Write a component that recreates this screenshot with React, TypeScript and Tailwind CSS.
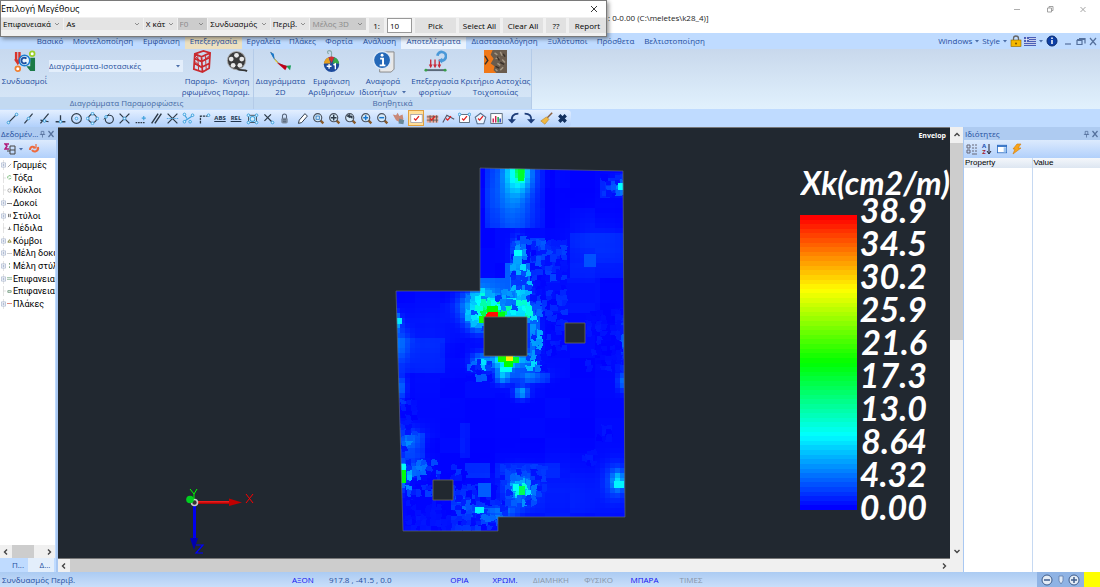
import type { ReactNode } from 'react';

const INK = '#1f4e9e';

/* ---------- colour scale ---------- */

const STOPS = [
  [0, 0, 255],
  [0, 255, 255],
  [0, 255, 0],
  [255, 255, 0],
  [255, 0, 0],
];

function heat(v: number) {
  const t = Math.min(0.9999, Math.max(0, v)) * 4;
  const i = Math.floor(t);
  const c = STOPS[i].map((a, k) => Math.round(a + (STOPS[i + 1][k] - a) * (t - i)));
  return `rgb(${c.join(',')})`;
}

/* ---------- reinforcement field ---------- */

// x, y, rx, ry, peak
const blobs: number[][] = [
  [519, 172, 13, 20, 0.2],
  [521, 172, 4, 7, 0.2],
  [512, 195, 22, 55, 0.11],
  [486, 308, 13, 13, 0.2],
  [472, 305, 15, 14, 0.12],
  [480, 322, 13, 12, 0.14],
  [519, 285, 8, 22, 0.07],
  [518, 252, 6, 14, 0.1],
  [534, 330, 6, 28, 0.14],
  [506, 360, 13, 9, 0.3],
  [482, 362, 10, 8, 0.14],
  [526, 360, 10, 8, 0.12],
  [503, 376, 7, 8, 0.16],
  [525, 376, 18, 7, 0.09],
  [522, 393, 7, 6, 0.16],
  [620, 186, 8, 7, 0.12],
  [397, 322, 4, 8, 0.16],
  [398, 345, 12, 18, 0.09],
  [400, 388, 6, 12, 0.11],
  [405, 440, 17, 12, 0.08],
  [403, 476, 4, 12, 0.2],
  [413, 467, 12, 10, 0.07],
  [520, 489, 7, 9, 0.2],
  [519, 488, 15, 15, 0.11],
  [619, 481, 6, 9, 0.14],
  [616, 482, 12, 18, 0.07],
  [622, 340, 4, 20, 0.08],
  [622, 382, 4, 9, 0.1],
  [500, 512, 18, 7, 0.11],
  [478, 510, 7, 4, 0.12],
  [460, 500, 8, 8, 0.09],
  [560, 500, 50, 30, 0.025],
  [600, 240, 30, 25, 0.02],
  [430, 335, 25, 30, 0.02],
];

// stepped zones: x0, y0, x1, y1, value
const zones: number[][] = [
  [484, 168, 495, 229, 0.015],
  [545, 168, 557, 229, -0.01],
  [480, 277, 508, 312, 0.09],
  [508, 264, 530, 300, 0.08],
  [498, 300, 530, 317, 0.2],
  [527, 312, 533, 325, 0.08],
  [470, 290, 484, 300, 0.06],
  [532, 240, 546, 262, 0.05],
  [546, 242, 562, 276, 0.025],
  [572, 235, 625, 278, 0.02],
  [599, 177, 613, 200, 0.03],
  [545, 280, 600, 316, 0.012],
  [398, 340, 444, 374, 0.02],
  [528, 372, 549, 382, 0.03],
  [462, 422, 472, 460, 0.02],
  [464, 466, 490, 478, 0.04],
  [497, 465, 560, 480, 0.02],
  [404, 436, 427, 457, 0.03],
];

// x0, y0, x1, y1, amplitude of the broken mesh
const rough: number[][] = [
  [508, 235, 530, 300, 0.1],
  [530, 240, 562, 312, 0.05],
  [462, 292, 484, 330, 0.1],
  [484, 290, 530, 312, 0.08],
  [527, 312, 541, 356, 0.09],
  [545, 290, 562, 352, 0.04],
  [585, 310, 625, 370, 0.025],
  [465, 356, 488, 376, 0.12],
  [524, 352, 545, 370, 0.12],
  [406, 458, 442, 492, 0.09],
  [450, 462, 462, 515, 0.07],
  [462, 484, 505, 515, 0.07],
  [404, 500, 450, 530, 0.02],
  [450, 508, 498, 530, 0.07],
  [500, 465, 545, 505, 0.04],
  [600, 175, 624, 195, 0.05],
  [398, 400, 412, 450, 0.03],
  [580, 450, 596, 462, 0.03],
  [594, 425, 610, 440, 0.03],
];

// flat elements: x, y, w, h, value
const patches: number[][] = [
  [518, 169, 6, 12, 0.46],
  [498, 312, 7, 5, 0.48],
  [487, 306, 11, 7, 0.5],
  [479, 316, 5, 7, 0.52],
  [498, 356, 8, 6, 0.52],
  [506, 356, 7, 5, 0.77],
  [513, 357, 6, 6, 0.46],
  [504, 361, 9, 6, 0.5],
  [500, 367, 12, 5, 0.26],
  [514, 250, 8, 6, 0.25],
  [513, 256, 9, 8, 0.16],
  [584, 254, 12, 13, 0.08],
  [618, 183, 6, 7, 0.25],
  [397, 318, 5, 6, 0.23],
  [401, 470, 5, 13, 0.49],
  [401, 464, 5, 6, 0.26],
  [519, 486, 6, 9, 0.42],
  [513, 484, 6, 7, 0.26],
  [614, 481, 10, 7, 0.24],
  [475, 507, 9, 6, 0.24],
  [478, 483, 13, 14, 0.09],
];

function hash(a: number, b: number) {
  const s = Math.sin(a * 127.1 + b * 311.7) * 43758.5453;
  return s - Math.floor(s);
}

function field(x: number, y: number) {
  let v = 0;
  for (const [bx, by, rx, ry, p] of blobs) {
    // the strip over the first beam stops short at the beam line
    if (by < 200 && bx < 600 && (y > 229 || x < 485)) continue;
    v += p * Math.exp(-(((x - bx) / rx) ** 2) - ((y - by) / ry) ** 2);
  }
  for (const [x0, y0, x1, y1, z] of zones) {
    if (x >= x0 && x < x1 && y >= y0 && y < y1) v += z;
  }
  return v + 0.01 * hash(Math.floor(x / 26), Math.floor(y / 19));
}

const CW = 5;
const cells: { d: string; fill: string }[] = [];
for (let x = 395; x < 626; x += CW) {
  for (let y = 168; y < 532; y += CW) {
    cells.push({ d: `M${x} ${y}h${CW}v${CW}h-${CW}z`, fill: heat(field(x + 3, y + 3)) });
  }
}
for (let x = 396; x < 624; x += 5) {
  for (let y = 170; y < 530; y += 5) {
    const r = rough.find(([x0, y0, x1, y1]) => x >= x0 && x < x1 && y >= y0 && y < y1);
    const h = hash(x, y);
    if (!r || h < 0.3) continue;
    const j = (k: number) => (hash(x + k, y - k) - 0.5) * 3;
    const v = h > 0.55 ? field(x, y) + r[4] * (h - 0.3) : field(x, y) * h;
    cells.push({
      d: `M${x + j(1)} ${y + j(2)}L${x + 6 + j(3)} ${y + j(4)}L${x + 6 + j(5)} ${y + 6 + j(6)}L${x + j(7)} ${y + 6 + j(8)}z`,
      fill: heat(v),
    });
  }
}

const SLAB = 'M480 168L623 171L625 517H498V531H403L396 291H480z';
const HOLES = 'M484 317h43v39h-43zM565 323h20v20h-20zM433 480h20v20h-20z';

function Model() {
  return (
    <svg viewBox="58 128 892 430" className="block h-full w-full" preserveAspectRatio="xMidYMid meet" aria-label="Xk contour">
      <defs>
        <clipPath id="slab">
          <path d={SLAB} />
        </clipPath>
        <linearGradient id="shaftX" x1="0" y1="0" x2="0" y2="1">
          <stop offset="0" stopColor="#ff2020" />
          <stop offset="1" stopColor="#a00000" />
        </linearGradient>
      </defs>
      <g clipPath="url(#slab)" shapeRendering="crispEdges">
        {cells.map((c, i) => (
          <path key={i} d={c.d} fill={c.fill} />
        ))}
        {patches.map(([x, y, w, h, v], i) => (
          <rect key={i} x={x} y={y} width={w} height={h} fill={heat(v)} />
        ))}
        <path d="M488 312L498 311.500V317H484.500z" fill="#ff0c00" />
      </g>
      <path d={SLAB} fill="none" stroke="#5b6470" strokeWidth="0.7" />
      <path d={HOLES} fill="#212830" stroke="#6b6a5c" strokeWidth="0.8" />

      {/* axis triad */}
      <rect x="195" y="501" width="36" height="3" fill="url(#shaftX)" />
      <path d="M229 498.500L242 502.500L229 506z" fill="#c00000" />
      <rect x="193" y="504" width="3" height="36" fill="#0000f0" />
      <path d="M190 538h8l-4 12z" fill="#0000b0" />
      <circle cx="194.500" cy="502.500" r="3" fill="#333" stroke="#ccc" strokeWidth="1.600" />
      <circle cx="190" cy="499.500" r="3.800" fill="#00d020" />
      <path d="M246 494l7 9M253 494l-7 9" stroke="#f00" fill="none" />
      <path d="M190 489l4 5l3-5M194 494v5" stroke="#0f0" fill="none" />
      <path d="M196 545h7l-7 8h7" stroke="#00f" fill="none" strokeWidth="1.200" />
    </svg>
  );
}

const scaleValues = ['38.9', '34.5', '30.2', '25.9', '21.6', '17.3', '13.0', '8.64', '4.32', '0.00'];

function Legend() {
  return (
    <div className="absolute top-[38px] right-0 w-[150px] overflow-hidden font-[Lato,sans-serif] font-bold text-white italic">
      <div className="pl-px text-[32px] leading-[33px] whitespace-nowrap">Xk(cm2/m)</div>
      <div className="flex">
        <svg viewBox="0 0 57 64" preserveAspectRatio="none" className="mt-4 h-[295px] w-[57px]" shapeRendering="crispEdges">
          {Array.from({ length: 64 }, (_, i) => (
            <rect key={i} y={i} width="57" height="1.1" fill={heat(1 - i / 63)} />
          ))}
        </svg>
        <ul className="-mt-[6px] w-[70px] text-right text-[34px] leading-[33px]">
          {scaleValues.map((v) => (
            <li key={v}>{v}</li>
          ))}
        </ul>
      </div>
    </div>
  );
}

/* ---------- dialog over the title bar ---------- */

function DialogSelect({ label, width, disabled }: { label: string; width: string; disabled?: boolean }) {
  return (
    <div className={`relative h-3 ${width} ${disabled ? 'bg-[#cccccc] text-[#8a8a8a]' : 'bg-[#e4e4e4] text-black'}`}>
      <select
        aria-label={label}
        disabled={disabled}
        defaultValue={label}
        className="block h-3 w-full appearance-none bg-transparent pl-[2px] text-[8px] leading-3"
      >
        <option>{label}</option>
      </select>
      <svg viewBox="0 0 8 8" className="pointer-events-none absolute top-[2px] right-[2px] h-2 w-2" fill="none" stroke="#777">
        <path d="M2 3l2 2l2-2" strokeWidth="0.8" />
      </svg>
    </div>
  );
}

const dialogButton = 'h-[15px] bg-[#e1e1e1] text-center text-[8px] leading-[15px] whitespace-nowrap';

function SizeDialog() {
  return (
    <div
      role="dialog"
      aria-label="Επιλογή Μεγέθους"
      className="absolute top-0 left-0 z-20 flex h-[37px] w-[607px] flex-col border border-[#7a7a7a] bg-[#f0f0f0] text-black shadow-[2px_2px_4px_rgba(0,0,0,0.4)]"
    >
      <div className="flex h-4 items-center justify-between bg-white pr-2">
        <span className="text-[9px] leading-4">Επιλογή Μεγέθους</span>
        <button aria-label="Close">
          <svg viewBox="0 0 8 8" className="h-2 w-2" stroke="#222">
            <path d="M1 1l6 6M7 1L1 7" strokeWidth="0.9" />
          </svg>
        </button>
      </div>
      <div className="flex flex-1 items-start gap-px pt-px">
        <DialogSelect label="Επιφανειακά" width="w-[63px]" />
        <DialogSelect label="As" width="w-[79px]" />
        <DialogSelect label="Χ κάτ" width="w-[33px]" />
        <DialogSelect label="F0" width="w-[30px]" disabled />
        <DialogSelect label="Συνδυασμός" width="w-[62px]" />
        <DialogSelect label="Περιβ." width="w-[39px]" />
        <DialogSelect label="Μέλος 3D" width="w-[56px]" disabled />
        <div className="ml-[2px] flex gap-[3px]">
          <label htmlFor="scale" className={`${dialogButton} w-[15px]`}>
            1:
          </label>
          <input id="scale" defaultValue="10" className="h-[15px] w-[25px] border border-[#999] bg-white pl-[2px] text-[8px] outline-none" />
          <button className={`${dialogButton} w-[41px]`}>Pick</button>
          <button className={`${dialogButton} w-[41px]`}>Select All</button>
          <button className={`${dialogButton} w-[40px]`}>Clear All</button>
          <button className={`${dialogButton} w-[20px]`}>??</button>
          <button className={`${dialogButton} w-[37px]`}>Report</button>
        </div>
      </div>
    </div>
  );
}

/* ---------- title bar and tabs ---------- */

function TitleBar() {
  return (
    <header className="flex h-[33px] shrink-0 justify-between bg-white pl-[607px]">
      <h1 className="pt-[10px] pl-px text-[8px] leading-4 whitespace-nowrap text-[#222]">: 0-0.00 (C:\meletes\k28_4)]</h1>
      <div className="flex gap-[25px] pt-[5px] pr-[13px] text-[#999]">
        <button aria-label="Minimize" className="h-2 w-2">
          <svg viewBox="0 0 8 8" stroke="currentColor" strokeWidth="0.8">
            <path d="M1 4.500h6" />
          </svg>
        </button>
        <button aria-label="Restore" className="h-2 w-2">
          <svg viewBox="0 0 8 8" stroke="currentColor" fill="none" strokeWidth="0.9">
            <path d="M1.500 3h4v4h-4zM3 3V1.500h4v4H5.500" />
          </svg>
        </button>
        <button aria-label="Close" className="h-2 w-2">
          <svg viewBox="0 0 8 8" stroke="currentColor" strokeWidth="0.9">
            <path d="M1.500 2l5 5M6.500 2l-5 5" />
          </svg>
        </button>
      </div>
    </header>
  );
}

const tabs = [
  'Βασικό', 'Μοντελοποίηση', 'Εμφάνιση', 'Επεξεργασία', 'Εργαλεία', 'Πλάκες', 'Φορτία',
  'Ανάλυση', 'Αποτελέσματα', 'Διαστασιολόγηση', 'Ξυλότυποι', 'Πρόσθετα', 'Βελτιστοποίηση',
];

function Caret() {
  return (
    <svg viewBox="0 0 6 4" className="h-1 w-[6px] shrink-0" fill="#4a6ea9">
      <path d="M1 1h4L3 3.500z" />
    </svg>
  );
}

function TabBar() {
  return (
    <nav className="flex h-4 shrink-0 justify-between bg-[#bfdbff] pl-8">
      <div className="grid grid-cols-[36px_70px_47px_57px_43px_35px_38px_43px_65px_77px_49px_47px_71px]">
        {tabs.map((t) => (
          <button
            key={t}
            className={`text-center text-[8px] leading-4 whitespace-nowrap ${
              t === 'Επεξεργασία' ? 'bg-[#ece0c0]' : t === 'Αποτελέσματα' ? 'bg-[#e9f2fd]' : ''
            }`}
          >
            {t}
          </button>
        ))}
      </div>
      <div className="flex items-center gap-[2px] pr-px text-[8px]">
        <button className="flex items-center gap-[2px]">
          Windows <Caret />
        </button>
        <button className="flex items-center gap-[2px]">
          Style <Caret />
        </button>
        <button aria-label="Lock">
          <svg viewBox="0 0 12 12" className="h-3 w-3">
            <path d="M3.500 6V3.500a2.500 2.500 0 0 1 5 0V6" fill="none" stroke="#666" strokeWidth="1.300" />
            <rect x="1" y="5" width="10" height="6.500" fill="#f5b800" stroke="#8a6500" strokeWidth="0.6" />
            <circle cx="6" cy="8.500" r="1" fill="#7a5300" />
          </svg>
        </button>
        <button aria-label="Language" className="flex items-center gap-[2px]">
          <svg viewBox="0 0 12 9" className="h-[9px] w-3">
            <rect width="12" height="9" fill="#4a5fb8" />
            <path d="M5 1.500h7M5 3.500h7M0 5.500h12M0 7.500h12M2.500 0v5M0 2.500h5" stroke="#fff" strokeWidth="0.7" />
          </svg>
          <Caret />
        </button>
        <button aria-label="About">
          <svg viewBox="0 0 12 12" className="h-3 w-3">
            <circle cx="6" cy="6" r="5" fill="#0d3fa6" stroke="#082a70" />
            <path d="M6 2.500v1.500M6 5v4" stroke="#fff" strokeWidth="1.500" />
          </svg>
        </button>
        <span className="flex gap-[2px] pl-[2px]">
          {['M3 8h6', 'M2 3.500h8M2 4.500h5v4H2zM4 2.500h6v5', 'M2 2l6 7M8 2L2 9'].map((d, i) => (
            <button key={d} aria-label={['Minimize view', 'Restore view', 'Close view'][i]}>
              <svg viewBox="0 0 11 11" className="h-[11px] w-[11px]" fill="none" stroke="#54709c" strokeWidth="1.200">
                <path d={d} />
              </svg>
            </button>
          ))}
        </span>
      </div>
    </nav>
  );
}

/* ---------- ribbon ---------- */

const icons: Record<string, ReactNode> = {
  combos: (
    <>
      <path d="M2 2h2.500v9H2zM5.500 2H8v9H5.500zM1 10h8l-4 6z" fill="#d8342c" />
      <path d="M18 8h5v14h-5l-4-5h4z" fill="#1b7a46" />
      <circle cx="12" cy="11" r="5.500" fill="#e8f4fc" stroke="#1b7fd0" strokeWidth="1.600" />
      <path d="M14 9a3 3 0 1 0 0 4" fill="none" stroke="#1b4fa0" strokeWidth="2" />
      <circle cx="20" cy="4" r="2.500" fill="#fff" stroke="#9bcf2a" strokeWidth="1.800" />
      <circle cx="5" cy="19.500" r="2.500" fill="#fff" stroke="#f08030" strokeWidth="1.800" />
    </>
  ),
  frame: (
    <g fill="none" stroke="#c92a2f" strokeWidth="1.800">
      <path d="M5 4L14 1L21 3L20 19L13 23L4 20zM5 4l7 3L21 3M12 7l1 16M5 9l7 3l8-4M5 14l7 4l8-4" />
      <path d="M8 5l1 16M16 6l1 15M5 6l7 7M20 6l-7 6M5 12l7 6" strokeWidth="1" />
    </g>
  ),
  film: (
    <>
      <circle cx="12" cy="11" r="9.500" fill="#3a3a3a" stroke="#aaa" />
      <g fill="#e8e8e8">
        <circle cx="12" cy="5.500" r="2.500" />
        <circle cx="6.500" cy="9.500" r="2.500" />
        <circle cx="17.500" cy="9.500" r="2.500" />
        <circle cx="8.500" cy="16" r="2.500" />
        <circle cx="15.500" cy="16" r="2.500" />
      </g>
      <path d="M13 20c4 2 7 0 10 2" stroke="#333" strokeWidth="2" fill="none" />
    </>
  ),
  diagram: (
    <>
      <path d="M2 2C6 12 12 17 22 17" fill="none" stroke="#777" />
      <path d="M1 2L5 4L6 11z" fill="#1877c8" />
      <path d="M5 8l2 4l4 3z" fill="#e8d020" />
      <path d="M8 13L17 21L19 17z" fill="#c00018" />
      <path d="M18 17L23 16L22 21z" fill="#18a058" />
    </>
  ),
  numbering: (
    <>
      <path d="M9 4c-4-4 4-5 3 0v3" fill="none" stroke="#8aa" strokeWidth="1.200" />
      <circle cx="12" cy="15" r="8" fill="#1c4a9c" />
      <path d="M4 14a8 8 0 0 1 5-6.500l2 6.500z" fill="#e8a020" />
      <path d="M9 7.500a8 8 0 0 1 6 0l-3 6z" fill="#d03030" />
      <path d="M15 7.500a8 8 0 0 1 5 6.500h-7z" fill="#38a848" />
      <path d="M7 17h5M9.500 14.500v5M14 15.500l2-1v5.500" stroke="#fff" strokeWidth="1.400" fill="none" />
    </>
  ),
  info: (
    <>
      <path d="M10 2h13v18l-3 3H8V6z" fill="#e8e8e8" stroke="#888" />
      <circle cx="10.500" cy="10.500" r="9" fill="#2468b8" stroke="#dbe8f8" strokeWidth="1.500" />
      <path d="M8.500 9h3v7M8 16h6" stroke="#fff" strokeWidth="2" fill="none" />
      <circle cx="10.500" cy="5.500" r="1.500" fill="#fff" />
    </>
  ),
  loads: (
    <>
      <path d="M1 21h22" stroke="#5a6878" strokeWidth="2" />
      <path d="M7 10v7M11.500 10v7M16 10v7" stroke="#c82838" strokeWidth="1.400" />
      <path d="M5 15h4l-2 4zM9.500 15h4l-2 4zM14 15h4l-2 4z" fill="#c82838" />
      <path d="M14 6a4.500 4.500 0 1 1 4 5" fill="none" stroke="#4a98d8" strokeWidth="2.800" />
      <path d="M19 8v6l-4-3z" fill="#4a98d8" />
      <circle cx="2" cy="21" r="1.500" fill="#38a048" />
      <circle cx="22" cy="21" r="1.500" fill="#38a048" />
    </>
  ),
  masonry: (
    <>
      <rect width="24" height="24" fill="#6a5c4e" />
      <path d="M0 0h9l-2 5l3 4l-3 5l4 3l-1 4l3 3H0z" fill="#f07818" />
      <path d="M11 3l3 2M17 2l2 4M12 9l4-1M19 10l3 3M14 14l3 2M20 18l-3 3M12 20l2 2" stroke="#a39784" strokeWidth="1.500" />
      <path d="M14 7l2 4M20 4l2 3M17 13l4 2M12 17l4 2M1 6l3 5l-3 4" fill="none" stroke="#38302a" strokeWidth="1.500" />
    </>
  ),
};

function RibbonButton({ icon, lines, width, menu }: { icon: string; lines: string[]; width: string; menu?: boolean }) {
  return (
    <button className={`flex shrink-0 flex-col items-center pt-px ${width}`}>
      <svg viewBox="0 0 24 24" className="mb-[2px] h-[23px] w-[23px]">
        {icons[icon]}
      </svg>
      {lines.map((l, i) => (
        <span key={l} className="flex items-center gap-1 text-[8px] leading-[11px] whitespace-nowrap">
          {l}
          {menu && i === 1 && <Caret />}
        </span>
      ))}
    </button>
  );
}

function RibbonGroup({ title, children }: { title: string; children: ReactNode }) {
  return (
    <section className="flex flex-col border-r border-[#b4cbe8] bg-linear-to-b from-[#c7d9ef] to-[#d8e8f8]">
      <div className="flex flex-1">{children}</div>
      <h2 className="h-3 bg-[#c2d9f1] text-center text-[8px] leading-3 text-[#4569a5]">{title}</h2>
    </section>
  );
}

function Ribbon() {
  return (
    <div className="flex h-[60px] shrink-0 bg-linear-to-b from-[#c8d8ec] to-[#e1f1fd]">
      <RibbonGroup title="Διαγράμματα Παραμορφώσεις">
        <RibbonButton icon="combos" lines={['Συνδυασμοί΄']} width="w-[49px]" />
        <div className="relative mt-[11px] h-3 w-[134px] bg-[#e3eefb]">
          <select aria-label="Διαγράμματα" className="block h-3 w-full appearance-none text-[8px] leading-3">
            <option>Διαγράμματα-Ισοτασικές</option>
          </select>
          <span className="pointer-events-none absolute top-1 right-[2px]">
            <Caret />
          </span>
        </div>
        <RibbonButton icon="frame" lines={['Παραμο-', 'ρφωμένος']} width="w-9" />
        <RibbonButton icon="film" lines={['Κίνηση', 'Παραμ.']} width="w-[34px]" />
      </RibbonGroup>
      <RibbonGroup title="Βοηθητικά">
        <RibbonButton icon="diagram" lines={['Διαγράμματα', '2D']} width="w-[53px]" />
        <RibbonButton icon="numbering" lines={['Εμφάνιση', 'Αριθμήσεων']} width="w-[49px]" />
        <RibbonButton icon="info" lines={['Αναφορά', 'Ιδιοτήτων']} width="w-[54px]" menu />
        <RibbonButton icon="loads" lines={['Επεξεργασία', 'φορτίων']} width="w-[50px]" />
        <RibbonButton icon="masonry" lines={['Κριτήριο Αστοχίας', 'Τοιχοποιίας']} width="w-[71px]" />
      </RibbonGroup>
    </div>
  );
}

/* ---------- snap / zoom toolbar ---------- */

const B = '#3fa0dc';
const K = '#2d3a48';

function dot(x: number, y: number) {
  return <circle key={`${x}-${y}`} cx={x} cy={y} r="1.600" fill="#d8f0ff" stroke={B} strokeWidth="1.200" />;
}

function lens(mark: ReactNode) {
  return (
    <>
      <path d="M10 10l4 4" stroke="#8a5a28" strokeWidth="2.800" />
      <circle cx="7" cy="7" r="5" fill="#d5e9f8" stroke="#4a5260" strokeWidth="1.400" />
      {mark}
    </>
  );
}

const snaps: [string, ReactNode][] = [
  ['End point', <><path d="M3 13L13 3" stroke={K} strokeWidth="1.500" />{dot(3, 13)}{dot(13, 3)}</>],
  ['Mid point', <><path d="M3 14L13 2" stroke={K} strokeWidth="1.500" />{dot(8, 8)}</>],
  ['Nearest', <><path d="M3 14L13 2M3 10l10 2" stroke={K} strokeWidth="1.500" />{dot(8, 11)}</>],
  ['Perpendicular', <><path d="M2 12h12M8 4v8" stroke={K} strokeWidth="1.600" />{dot(8, 12)}</>],
  ['Centre', <><circle cx="8" cy="8" r="6" fill="none" stroke={K} strokeWidth="1.400" />{dot(8, 8)}</>],
  ['Quadrant', <><circle cx="8" cy="8" r="5" fill="none" stroke={K} strokeWidth="1.400" />{dot(8, 2)}{dot(8, 14)}{dot(2, 8)}{dot(14, 8)}</>],
  ['Tangent', <><circle cx="9" cy="9" r="5" fill="none" stroke={K} strokeWidth="1.400" /><path d="M2 9L9 2" stroke={K} />{dot(5, 6)}</>],
  ['Intersection', <><path d="M2 2l12 12M14 2L2 14" stroke={K} strokeWidth="1.600" />{dot(8, 8)}</>],
  ['Extension', <><path d="M2 13h12" stroke={K} strokeWidth="1.500" strokeDasharray="2 1" /><path d="M12 5v5M9.500 7.500h5" stroke={B} strokeWidth="1.400" /></>],
  ['Parallel', <path d="M2 14L10 2M6 14L14 2" stroke={K} strokeWidth="1.800" />],
  ['Apparent', <><path d="M2 2l12 12M14 2L2 14" stroke={K} strokeWidth="1.500" /><path d="M1 8h14" stroke={B} strokeDasharray="2 1" /></>],
  ['Node', <><path d="M2 12L14 4M3 3l3 5" stroke={B} strokeWidth="1.400" />{dot(3, 3)}{dot(3, 12)}{dot(10, 12)}{dot(13, 4)}</>],
  ['Insertion', <><path d="M3 14V5h9" stroke={K} strokeWidth="1.600" fill="none" strokeDasharray="3 1" />{dot(13, 4)}</>],
];

const snapsEnd: [string, ReactNode][] = [
  ['Box', <><rect x="3" y="4" width="10" height="9" fill="#d5ecfa" stroke={K} /><circle cx="8" cy="8.500" r="3" fill="none" stroke={B} strokeWidth="1.400" />{dot(3, 4)}{dot(13, 4)}{dot(3, 13)}{dot(13, 13)}</>],
  ['Clear snaps', <><path d="M3 3l9 9M11 3L3 11" stroke={K} strokeWidth="1.500" />{dot(13, 13)}</>],
  ['Lock snaps', <><rect x="4" y="7" width="8" height="7" rx="2" fill="#8090a4" /><path d="M5.500 8V5a2.500 2.500 0 0 1 5 0v3M6 9.500h4M6 12h4" fill="none" stroke="#56657a" strokeWidth="1.300" /></>],
];

const zooms: [string, ReactNode][] = [
  ['Sketch', <path d="M3 14l1-4l7-8l3 3l-7 8z" fill="#fff" stroke={K} strokeWidth="1.200" />],
  ['Zoom window', lens(<rect x="5" y="5" width="4" height="4" fill="none" stroke="#2a78c0" />)],
  ['Zoom extents', lens(<path d="M7 3.500v7M3.500 7h7" stroke={K} strokeWidth="1.800" />)],
  ['Zoom previous', lens(<path d="M4 5h6v3M4 5l3-2v4z" stroke={K} fill={K} />)],
  ['Zoom in', lens(<path d="M7 4v6M4 7h6" stroke="#1878d0" strokeWidth="1.800" />)],
  ['Zoom out', lens(<path d="M4 7h6" stroke="#1878d0" strokeWidth="1.800" />)],
  ['Pan', <><path d="M1 3l4 1l2-3l2 4l4-2l1 6l-4 4l-5-3z" fill="#c88878" /><path d="M9 8l6 2l-1 5l-6-1z" fill="#688898" /></>],
];

const tick = <path d="M5 8l2 2l4-5" fill="none" stroke="#e02020" strokeWidth="1.600" />;

const picks: [string, ReactNode][] = [
  ['Select', <><rect x="1" y="3" width="14" height="10" fill="#fff" stroke="#889" strokeWidth="0.8" />{tick}</>],
  ['Select hatch', <><rect x="1" y="4" width="14" height="9" fill="#e8a898" /><path d="M1 6h14M1 10h14M5 4v9M9 4v9M13 4v9" stroke="#555" />{tick}</>],
  ['Select polyline', <><path d="M1 13L6 4l9 5" fill="none" stroke="#556" strokeWidth="1.400" />{tick}</>],
  ['Select window', <><rect x="2" y="3" width="12" height="10" fill="#fff" stroke="#456" />{tick}{dot(2, 3)}{dot(14, 3)}</>],
  ['Select polygon', <><path d="M8 1.500l6.500 5l-2.500 8H4L1.500 6.500z" fill="#eef6ff" stroke="#5a7290" strokeWidth="1.300" />{tick}</>],
  ['Chart', <><rect x="1" y="2" width="14" height="12" fill="#fff" stroke="#456" /><path d="M4 13V8M7 13V5" stroke="#d02050" strokeWidth="1.800" /><path d="M10 13V6" stroke="#18a048" strokeWidth="1.800" /><path d="M12.500 13V8" stroke="#2040c0" strokeWidth="1.800" /></>],
];

const undo: [string, ReactNode][] = [
  ['Undo', <><path d="M14 2c-6 0-9 3-8 10" fill="none" stroke="#1d3c78" strokeWidth="2.200" /><path d="M1 9h10l-5 5z" fill="#1d3c78" /></>],
  ['Redo', <><path d="M2 2c6 0 9 3 8 9" fill="none" stroke="#1d3c78" strokeWidth="2.200" /><path d="M5 9h10l-5 5z" fill="#1d3c78" /></>],
];

const finish: [string, ReactNode][] = [
  ['Brush', <><path d="M15 1L9 7" stroke="#8a6040" strokeWidth="1.800" /><path d="M8 6l3 3l-5 6l-5-4z" fill="#f2b840" stroke="#b88018" strokeWidth="0.7" /></>],
  ['Delete', <path d="M4 4l8 8M12 4l-8 8" stroke="#12305e" strokeWidth="4" />],
];

function ToolGroup({ items, active }: { items: [string, ReactNode][]; active?: string }) {
  return (
    <>
      {items.map(([name, art]) => (
        <button
          key={name}
          aria-label={name}
          className={`flex h-4 w-4 items-center justify-center ${name === active ? 'border border-[#e0a040] bg-[#ffdf9a]' : ''}`}
        >
          <svg viewBox="0 0 16 16" className="h-[13px] w-[13px] shrink-0">
            {art}
          </svg>
        </button>
      ))}
    </>
  );
}

function Toolbar() {
  return (
    <div className="flex h-[18px] shrink-0 items-center bg-[#bfdbff]">
      <div className="flex h-[17px] items-center rounded-r bg-linear-to-b from-[#e3efff] to-[#b1d0fb] pr-px pl-1">
        <ToolGroup items={snaps} />
        <button className="w-4 text-center text-[6px] leading-4 font-bold text-[#22364f] underline">ABS</button>
        <button className="w-4 text-center text-[6px] leading-4 font-bold text-[#22364f] underline">REL</button>
        <ToolGroup items={snapsEnd} />
        <div className="ml-[2px] flex">
          <ToolGroup items={zooms} />
        </div>
        <div className="ml-[2px] flex">
          <ToolGroup items={picks} active="Select" />
        </div>
        <div className="ml-px flex">
          <ToolGroup items={undo} />
        </div>
        <div className="ml-px flex">
          <ToolGroup items={finish} />
        </div>
      </div>
    </div>
  );
}

/* ---------- side panels ---------- */

function PanelHeader({ title }: { title: string }) {
  return (
    <div className="flex h-[13px] shrink-0 items-center justify-between bg-[#aecbf1] px-px text-[8px] leading-[13px]">
      <h2 className="whitespace-nowrap">{title}</h2>
      <div className="flex shrink-0 gap-px">
        <button aria-label="Pin">
          <svg viewBox="0 0 8 8" className="h-2 w-[7px]" fill="none" stroke="#54709c" strokeWidth="0.9">
            <path d="M2.500 1h3v3.500h-3zM1 4.500h6M4 5v3" />
          </svg>
        </button>
        <button aria-label="Close panel">
          <svg viewBox="0 0 8 8" className="h-2 w-2" stroke="#54709c" strokeWidth="1.200">
            <path d="M1.500 1l5 6M6.500 1l-5 6" />
          </svg>
        </button>
      </div>
    </div>
  );
}

type TreeNode = { label: string; open?: boolean; color: string; d: string };

const tree: TreeNode[] = [
  { label: 'Γραμμές', open: true, color: '#888', d: 'M1 5L5 1' },
  { label: 'Τόξα', color: '#5a5', d: 'M1 4a2 2 0 0 1 4-2M2 5l3-1' },
  { label: 'Κύκλοι', color: '#999', d: 'M1 3a2 2 0 1 0 4 0a2 2 0 1 0-4 0' },
  { label: 'Δοκοί', open: true, color: '#555', d: 'M0 3h6v1' },
  { label: 'Στύλοι', open: true, color: '#333', d: 'M2 1v4M4 1v4' },
  { label: 'Πέδιλα', color: '#555', d: 'M1 4h4M3 1v3' },
  { label: 'Κόμβοι', open: true, color: '#6a6a10', d: 'M1 5h4L3 2z' },
  { label: 'Μέλη δοκών', open: true, color: '#bbb', d: 'M0 3h6' },
  { label: 'Μέλη στύλων', open: true, color: '#5a8a5a', d: 'M3 0v2M3 4v2' },
  { label: 'Επιφανειακά', open: true, color: '#7aa98a', d: 'M0 2h6M0 4h6' },
  { label: 'Επιφανειακά', color: '#5a8a6a', d: 'M1 2h4v2H1z' },
  { label: 'Πλάκες', open: true, color: '#d06050', d: 'M0 3h6' },
];

function Chevron({ d, label, size }: { d: string; label: string; size: string }) {
  return (
    <button aria-label={label} className={`flex shrink-0 items-center justify-center ${size}`}>
      <svg viewBox="0 0 8 8" className="h-2 w-2" fill="none" stroke="#444" strokeWidth="1.400">
        <path d={d} />
      </svg>
    </button>
  );
}

const LEFT = 'M5 1.500L2.500 4L5 6.500';
const RIGHT = 'M3 1.500L5.500 4L3 6.500';

function DataPanel() {
  return (
    <aside className="flex w-[58px] shrink-0 flex-col border-r-2 border-[#a9c8f2] bg-[#bfdbff]">
      <PanelHeader title="Δεδομέν..." />
      <div className="flex h-[18px] shrink-0 items-center gap-1 bg-linear-to-b from-[#dceafd] to-[#b1d0fb] pl-1">
        <button aria-label="Group data" className="flex items-center gap-[2px]">
          <svg viewBox="0 0 12 12" className="h-3 w-3" fill="none">
            <path d="M5 1H1l2 2l-2 3h4" stroke="#b01878" strokeWidth="1.500" />
            <path d="M6 3h5v8H6zM6 7h5M3 8h3" stroke="#444" />
          </svg>
          <Caret />
        </button>
        <button aria-label="Refresh">
          <svg viewBox="0 0 12 12" className="h-3 w-3" fill="none" stroke="#ee6a3c" strokeWidth="2">
            <path d="M2 7c0-4 4-4 5-2M10 4c1 4-4 6-6 3" />
            <path d="M8 1v4H5" strokeWidth="1.200" />
          </svg>
        </button>
      </div>
      <div className="mr-px flex-1 overflow-hidden bg-white pt-px font-[Roboto,'Open_Sans',sans-serif] text-[9px] text-black">
        <ul className="grid h-[151px] auto-rows-fr pl-px">
          {tree.map((n, i) => (
            <li key={i} className="flex items-center gap-px whitespace-nowrap">
              <svg viewBox="0 0 6 12" className="h-3 w-[5px] shrink-0" fill="none">
                <path d="M3 0v12M3 6h3" stroke="#bbb" strokeWidth="0.5" />
                {n.open && <path d="M0.500 3.500h5v5h-5zM1.500 6h3M3 4.500v3" stroke="#7f93b8" fill="#fff" strokeWidth="0.6" />}
              </svg>
              <svg viewBox="0 0 6 6" className="h-[5px] w-[5px] shrink-0" fill="none" stroke={n.color} strokeWidth="0.9">
                <path d={n.d} />
              </svg>
              <span className="leading-3">{n.label}</span>
            </li>
          ))}
        </ul>
      </div>
      <div className="mr-px flex h-[13px] shrink-0 bg-[#f0f0f0]">
        <Chevron d={LEFT} label="Scroll left" size="h-[13px] w-3" />
        <div className="w-[22px] bg-[#cdcdcd]" />
        <span className="flex-1" />
        <Chevron d={RIGHT} label="Scroll right" size="h-[13px] w-3" />
      </div>
      <div className="flex h-[14px] shrink-0 text-[8px] leading-[14px]">
        <button className="w-7 pl-2">Π...</button>
        <button className="w-[26px] bg-[#e3eefb] pl-2">Δ...</button>
      </div>
    </aside>
  );
}

function PropertiesPanel() {
  return (
    <aside className="flex w-[137px] shrink-0 flex-col border-l border-[#a9c8f2] bg-white">
      <PanelHeader title="Ιδιότητες" />
      <div className="flex h-[18px] shrink-0 items-center gap-1 bg-linear-to-b from-[#dceafd] to-[#b1d0fb] pl-[2px]">
        <button aria-label="Categorized">
          <svg viewBox="0 0 12 12" className="h-3 w-3" fill="none" stroke="#667">
            <path d="M1 2h3v3H1zM1 7h3v3H1zM6 2h2M9 2h2M6 5h2M9 5h2M6 8h2M9 8h2M6 11h5" />
          </svg>
        </button>
        <button aria-label="Sort" className="flex items-center text-[6px] leading-[6px] font-bold">
          <span className="flex flex-col">
            <span className="text-[#2050b0]">A</span>
            <span className="text-[#a02030]">Z</span>
          </span>
          <svg viewBox="0 0 6 12" className="h-3 w-[6px]" stroke="#223" fill="none">
            <path d="M3 1v9M1 8l2 3l2-3" />
          </svg>
        </button>
        <button aria-label="Pages" className="pl-px">
          <svg viewBox="0 0 12 12" className="h-3 w-[10px]">
            <rect x="0.500" y="1.500" width="11" height="9" fill="#fff" stroke="#2f6fc4" />
            <path d="M0 2.500h12" stroke="#2f6fc4" strokeWidth="2" />
            <path d="M8 4h3v6H8z" fill="#9cc4f0" />
          </svg>
        </button>
        <button aria-label="Events">
          <svg viewBox="0 0 12 12" className="h-3 w-3">
            <path d="M6 1h4L7 5h3L2 11l2-5H2z" fill="#f9a51a" stroke="#d07808" strokeWidth="0.6" />
          </svg>
        </button>
      </div>
      <table className="h-full w-full table-fixed border-collapse font-['Liberation_Sans',sans-serif] text-[8px] text-black">
        <thead>
          <tr className="h-[10px] bg-linear-to-b from-[#f4f7fb] to-[#dde6f1]">
            <th className="p-0 pl-px text-left leading-[10px] font-normal">Property</th>
            <th className="border-l border-[#c6d9f2] p-0 pl-px text-left leading-[10px] font-normal">Value</th>
          </tr>
        </thead>
        <tbody>
          <tr>
            <td />
            <td className="border-l border-[#c6d9f2]" />
          </tr>
        </tbody>
      </table>
    </aside>
  );
}

/* ---------- drawing area ---------- */

function Viewport() {
  return (
    <main className="flex min-w-0 flex-1 flex-col bg-[#f0f0f0]">
      <div className="flex min-h-0 flex-1">
        <div className="relative min-w-0 flex-1 border-t border-b border-t-[#777] border-b-[#777] bg-[#212830]">
          <Model />
          <span className="absolute top-[3px] right-1 font-['Open_Sans',sans-serif] text-[7px] leading-[9px] font-bold text-white">
            Envelop
          </span>
          <Legend />
        </div>
        <div className="flex w-[13px] shrink-0 flex-col bg-[#f0f0f0]">
          <Chevron d="M1.500 5L4 2.500L6.500 5" label="Scroll up" size="h-4 w-[13px]" />
          <div className="h-[197px] bg-[#cdcdcd]" />
          <span className="flex-1" />
          <Chevron d="M1.500 3L4 5.500L6.500 3" label="Scroll down" size="h-4 w-[13px]" />
        </div>
      </div>
      <div className="flex h-[13px] shrink-0 pr-[13px]">
        <Chevron d={LEFT} label="Scroll left" size="h-[13px] w-3" />
        <div className="w-[46%] bg-[#cdcdcd]" />
        <span className="flex-1" />
        <Chevron d={RIGHT} label="Scroll right" size="h-[13px] w-3" />
      </div>
    </main>
  );
}

/* ---------- status bar ---------- */

const modes = [
  { label: 'ΟΡΙΑ', on: true },
  { label: 'ΧΡΩΜ.', on: true },
  { label: 'ΔΙΑΜΗΚΗ', on: false },
  { label: 'ΦΥΣΙΚΟ', on: false },
  { label: 'ΜΠΑΡΑ', on: true },
  { label: 'ΤΙΜΕΣ', on: false },
];

function StatusBar() {
  return (
    <footer className="flex h-[15px] shrink-0 bg-linear-to-b from-[#abcbf2] to-[#c9defa] text-[8px] leading-[14px] whitespace-nowrap">
      <span className="w-[292px] pt-px pl-[2px]">Συνδυασμός Περιβ.</span>
      <button className="w-[37px] text-left text-[#1010f0]">ΑΞΟΝ</button>
      <span className="w-[108px] pt-px">917.8 , -41.5 , 0.0</span>
      <div className="grid grid-cols-[45px_46px_46px_49px_43px_50px] text-center">
        {modes.map((m) => (
          <button key={m.label} className={m.on ? 'text-[#1010f0]' : 'text-[#8795a8]'}>
            {m.label}
          </button>
        ))}
      </div>
      <div className="ml-auto flex w-[47px] items-center justify-between bg-[#8fb3e4] px-1">
        {['M3 6h6', 'M3 6h6M6 3v6'].map((d, i) => (
          <button key={d} aria-label={i ? 'Zoom in' : 'Zoom out'} className={i ? 'order-3' : 'order-1'}>
            <svg viewBox="0 0 12 12" className="h-3 w-3" fill="none" stroke="#3f5d8c">
              <circle cx="6" cy="6" r="5" fill="#e4ecf6" />
              <path d={d} strokeWidth="1.500" />
            </svg>
          </button>
        ))}
        <svg viewBox="0 0 8 10" className="order-2 h-[10px] w-2" fill="#dfe9f6" stroke="#5f7ca8" strokeWidth="0.8">
          <path d="M2 1h4v5L4 9L2 6z" />
        </svg>
      </div>
      <span className="w-4 bg-[#ffff00]" />
    </footer>
  );
}

export default function App() {
  return (
    <div className="relative flex h-screen flex-col overflow-hidden bg-[#bfdbff] font-['Open_Sans','Noto_Sans',sans-serif]" style={{ color: INK }}>
      <SizeDialog />
      <TitleBar />
      <TabBar />
      <Ribbon />
      <Toolbar />
      <div className="flex min-h-0 flex-1">
        <DataPanel />
        <Viewport />
        <PropertiesPanel />
      </div>
      <StatusBar />
    </div>
  );
}
